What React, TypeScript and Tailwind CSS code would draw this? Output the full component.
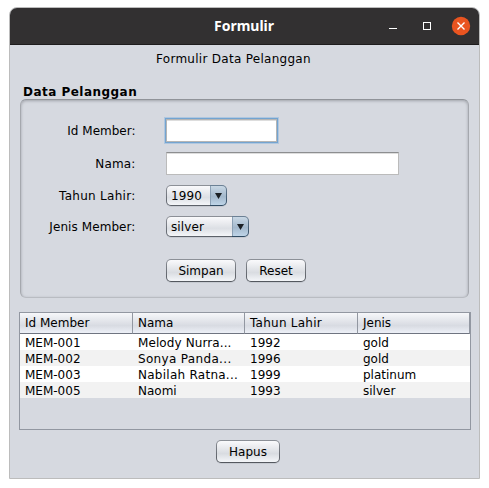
import type { ReactNode } from "react";

const columns = [
  { label: "Id Member", width: "w-[113px]", tracking: "" },
  { label: "Nama", width: "w-[112px]", tracking: "" },
  { label: "Tahun Lahir", width: "w-[113px]", tracking: "tracking-[0.25px]" },
  { label: "Jenis", width: "w-[112px]", tracking: "" },
];

const members = [
  { cells: ["MEM-001", "Melody Nurra...", "1992", "gold"], tracking: "tracking-[0.1px]" },
  { cells: ["MEM-002", "Sonya Panda...", "1996", "gold"], tracking: "tracking-[0.33px]" },
  { cells: ["MEM-003", "Nabilah Ratna...", "1999", "platinum"], tracking: "tracking-[0.26px]" },
  { cells: ["MEM-005", "Naomi", "1993", "silver"], tracking: "" },
];

function Button({ children, className }: { children: ReactNode; className: string }) {
  return (
    <button
      className={`h-[23px] rounded-[5px] bg-linear-to-b from-[#8d9198] to-[#53575e] p-px shadow-[0_1px_0_#c6cad1] ${className}`}
    >
      <span className="flex h-full items-center justify-center rounded-[4px] bg-linear-to-b from-[#fafafc] via-[#d9dce1] via-60% to-[#f4f6f9] leading-4">
        {children}
      </span>
    </button>
  );
}

function Combo({ value, className }: { value: string; className: string }) {
  return (
    <div className={`flex h-[21px] overflow-hidden rounded-[5px] shadow-[0_1px_0_#c6cad1] ${className}`}>
      <div className="flex-1 bg-linear-to-b from-[#8d9198] to-[#5b6068] py-px pl-px">
        <div className="h-full rounded-l-[4px] bg-linear-to-b from-[#fafafc] via-[#dcdfe4] via-60% to-[#f4f6f9] pt-px pl-1 leading-[19px] tracking-[0.1px]">
          {value}
        </div>
      </div>
      <div className="w-[17px] bg-linear-to-b from-[#6d8296] to-[#2f4a62] py-px pr-px">
        <div className="flex h-full items-center justify-center rounded-r-[4px] border-l border-[#8ba0b4] bg-linear-to-b from-[#c9d8e5] via-[#a3b8cc] via-55% to-[#bfd5e8]">
          <svg width="7" height="6" viewBox="0 0 7 6">
            <path d="M0 0H7L3.5 6Z" fill="#1b2025" />
          </svg>
        </div>
      </div>
    </div>
  );
}

interface FieldProps {
  label: string;
  className: string;
  tracking?: string;
  children: ReactNode;
}

function Field({ label, className, tracking = "", children }: FieldProps) {
  return (
    <div className={`flex items-center ${className}`}>
      <label className={`mr-[30.5px] w-[114.5px] text-right leading-4 whitespace-nowrap ${tracking}`}>{label}</label>
      {children}
    </div>
  );
}

export default function App() {
  return (
    <div className="h-[488px] w-[489px] overflow-hidden bg-white pt-[7px] pl-[9px] font-['DejaVu_Sans',sans-serif] text-[12px] text-black">
      <div className="flex h-[472px] w-[471px] flex-col overflow-hidden rounded-t-[8px] border border-[#bcbcbc] bg-[#d6d9e0]">
        <header className="flex h-[37px] shrink-0 items-center border-b border-[#1e1c1d] bg-[#323031] text-white">
          <h1 className="ml-[204px] w-[62px] font-['Noto_Sans',sans-serif] text-[14px] leading-5 font-bold whitespace-nowrap">
            Formulir
          </h1>
          <svg className="ml-[112px] shrink-0" width="88" height="36" viewBox="0 0 88 36">
            <path d="M1 20.5H9" stroke="white" />
            <rect x="35.5" y="14.5" width="7" height="7" fill="none" stroke="white" />
            <circle cx="73" cy="18" r="9.2" fill="#e95420" />
            <path d="M69.5 14.5L76.5 21.5M76.5 14.5L69.5 21.5" stroke="white" strokeWidth="1.4" />
          </svg>
        </header>

        <p className="mt-[6px] ml-[146px] leading-4 tracking-[0.28px] whitespace-nowrap">Formulir Data Pelanggan</p>
        <h2 className="mt-[17px] ml-[13px] leading-4 font-bold tracking-[0.47px]">Data Pelanggan</h2>

        <section className="-mt-px ml-[10px] h-[199px] w-[449px] shrink-0 rounded-[6px] border border-t-[#909399] border-r-[#a5a8ae] border-b-[#b9bcc2] border-l-[#a5a8ae] pt-[17px] shadow-[inset_0_1px_3px_#9fa2a9]">
          <Field label="Id Member:" className="h-[27px]">
            <div className="-ml-px h-[25px] w-[113px] border border-[#73a4d1] shadow-[0_0_0_1px_#b0c7df]">
              <input className="block h-[23px] w-[111px] border border-[#b5b5b5] bg-white px-1 shadow-[inset_0_1px_0_#dddddd] outline-none" />
            </div>
          </Field>
          <Field label="Nama:" className="mt-[8px] h-[23px]" tracking="tracking-[0.15px]">
            <input className="h-[23px] w-[233px] border border-[#bbbbbb] border-t-[#8d8e90] bg-white px-1 shadow-[inset_0_1px_0_#dddddd] outline-none" />
          </Field>
          <Field label="Tahun Lahir:" className="mt-[10px] h-[21px]" tracking="tracking-[0.28px]">
            <Combo value="1990" className="w-[61px]" />
          </Field>
          <Field label="Jenis Member:" className="mt-[10px] h-[21px]" tracking="tracking-[0.08px]">
            <Combo value="silver" className="w-[83px]" />
          </Field>
          <div className="mt-[22px] ml-[145px] flex gap-[10px]">
            <Button className="w-[70px]">Simpan</Button>
            <Button className="w-[60px]">Reset</Button>
          </div>
        </section>

        <div className="mt-[14px] ml-[9px] h-[118px] w-[452px] shrink-0 border border-[#9297a1]">
          <table className="w-[450px] table-fixed border-separate border-spacing-0">
            <thead>
              <tr className="h-[21px] bg-linear-to-b from-[#f6f7fa] via-[#d8dbe2] via-60% to-[#f0f3fa]">
                {columns.map((column) => (
                  <th
                    key={column.label}
                    className={`h-[21px] border-r border-b border-r-[#9297a1] border-b-[#6f7480] p-0 pl-[5px] text-left leading-4 font-normal ${column.width} ${column.tracking}`}
                  >
                    {column.label}
                  </th>
                ))}
              </tr>
            </thead>
            <tbody>
              {members.map(({ cells, tracking }) => (
                <tr key={cells[0]} className="h-4 odd:bg-white even:bg-[#f2f2f2]">
                  {cells.map((value, index) => (
                    <td
                      key={value}
                      className={`p-0 pt-[2px] pl-[5px] leading-[14px] whitespace-nowrap ${index === 1 ? tracking : ""}`}
                    >
                      {value}
                    </td>
                  ))}
                </tr>
              ))}
            </tbody>
          </table>
        </div>
        <Button className="mt-[10px] ml-[206px] w-[64px]">Hapus</Button>
      </div>
    </div>
  );
}
